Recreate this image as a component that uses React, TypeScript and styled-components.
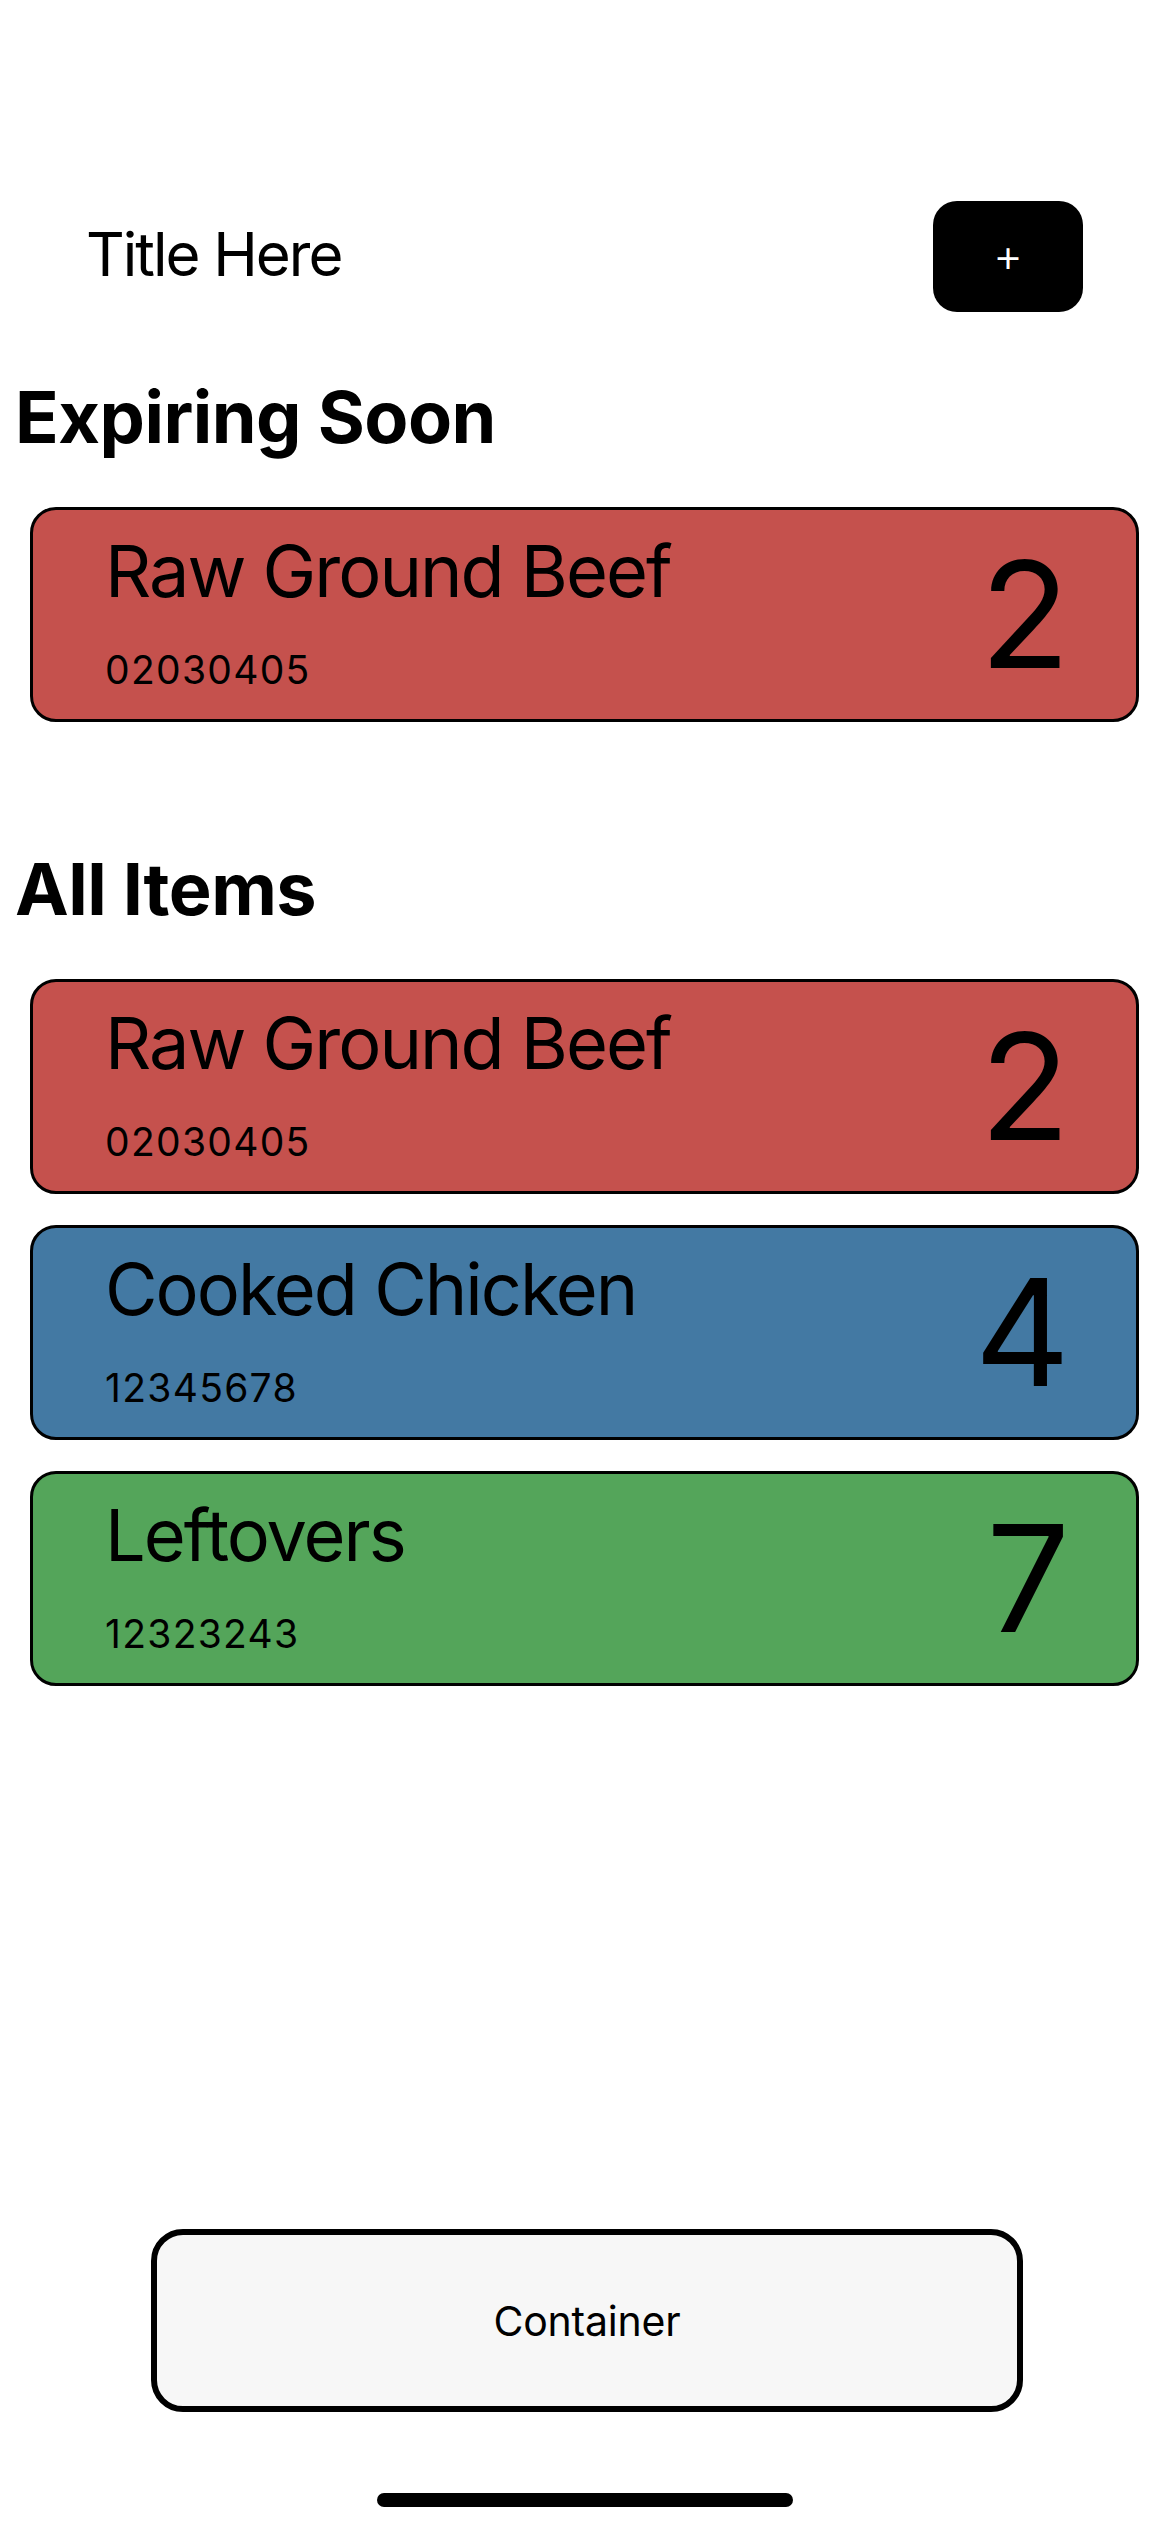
import React from "react";
import styled, { createGlobalStyle } from "styled-components";

const GlobalStyle = createGlobalStyle`
  html, body {
    margin: 0;
    padding: 0;
    background: #ffffff;
  }
  body {
    font-family: Inter, "Noto Sans", "Liberation Sans", sans-serif;
    color: #000000;
  }
  * { box-sizing: border-box; }
`;

const Screen = styled.div`
  width: 1170px;
  min-height: 2532px;
  display: flex;
  flex-direction: column;
  background: #ffffff;
`;

const Header = styled.header`
  margin-top: 201px;
  height: 111px;
  padding: 0 87px 0 86px;
  display: flex;
  align-items: center;
  justify-content: space-between;
`;

const Title = styled.h1`
  margin: 0 0 6px 0;
  font-size: 60px;
  line-height: 72px;
  font-weight: 400;
  letter-spacing: -2px;
`;

const AddButton = styled.button`
  width: 150px;
  height: 111px;
  border: none;
  border-radius: 24px;
  background: #000000;
  color: #ffffff;
  font-family: Inter, "Noto Sans", sans-serif;
  font-size: 46px;
  font-weight: 300;
  line-height: 1;
  display: flex;
  align-items: center;
  justify-content: center;
  padding: 0 0 4px 0;
  cursor: pointer;
`;

const Section = styled.section<{ $top: number }>`
  margin-top: ${(p) => p.$top}px;
  display: flex;
  flex-direction: column;
`;

const SectionHeading = styled.h2`
  margin: 0 0 47px 0;
  padding-left: 15px;
  font-size: 72px;
  line-height: 86px;
  font-weight: 700;
  letter-spacing: -0.5px;
`;

const CardList = styled.div`
  display: flex;
  flex-direction: column;
  gap: 31px;
  padding: 0 31px 0 30px;
`;

const Card = styled.div<{ $bg: string }>`
  height: 215px;
  border: 3px solid #000000;
  border-radius: 26px;
  background: ${(p) => p.$bg};
  display: flex;
  align-items: center;
  justify-content: space-between;
  padding: 0 66px 0 72px;
`;

const CardText = styled.div`
  display: flex;
  flex-direction: column;
  gap: 33px;
  margin-bottom: 8px;
`;

const ItemName = styled.div`
  font-size: 72px;
  line-height: 86px;
  font-weight: 400;
  letter-spacing: -2px;
`;

const ItemCode = styled.div`
  font-size: 39px;
  line-height: 46px;
  font-weight: 400;
  letter-spacing: 1.3px;
`;

const Count = styled.div`
  font-size: 148px;
  line-height: 1;
  font-weight: 400;
`;

const Spacer = styled.div`
  flex: 1;
`;

const Footer = styled.footer`
  display: flex;
  flex-direction: column;
  align-items: center;
  padding-bottom: 25px;
`;

const ContainerBox = styled.div`
  width: 872px;
  height: 183px;
  margin-left: 4px;
  border: 6px solid #000000;
  border-radius: 32px;
  background: #f7f7f7;
  display: flex;
  align-items: center;
  justify-content: center;
  font-size: 41px;
  font-weight: 400;
  letter-spacing: -0.2px;
`;

const HomeIndicator = styled.div`
  margin-top: 81px;
  width: 416px;
  height: 14px;
  border-radius: 7px;
  background: #000000;
`;

type Item = { name: string; code: string; count: number; color: string };

const RED = "#c5514d";
const BLUE = "#4379a3";
const GREEN = "#54a55a";

const expiring: Item[] = [
  { name: "Raw Ground Beef", code: "02030405", count: 2, color: RED },
];

const allItems: Item[] = [
  { name: "Raw Ground Beef", code: "02030405", count: 2, color: RED },
  { name: "Cooked Chicken", code: "12345678", count: 4, color: BLUE },
  { name: "Leftovers", code: "12323243", count: 7, color: GREEN },
];

function ItemCard({ item }: { item: Item }) {
  return (
    <Card $bg={item.color}>
      <CardText>
        <ItemName>{item.name}</ItemName>
        <ItemCode>{item.code}</ItemCode>
      </CardText>
      <Count>{item.count}</Count>
    </Card>
  );
}

export default function App() {
  return (
    <>
      <GlobalStyle />
      <Screen>
        <Header>
          <Title>Title Here</Title>
          <AddButton aria-label="Add">+</AddButton>
        </Header>

        <Section $top={62}>
          <SectionHeading>Expiring Soon</SectionHeading>
          <CardList>
            {expiring.map((it, i) => (
              <ItemCard key={i} item={it} />
            ))}
          </CardList>
        </Section>

        <Section $top={124}>
          <SectionHeading>All Items</SectionHeading>
          <CardList>
            {allItems.map((it, i) => (
              <ItemCard key={i} item={it} />
            ))}
          </CardList>
        </Section>

        <Spacer />

        <Footer>
          <ContainerBox>Container</ContainerBox>
          <HomeIndicator />
        </Footer>
      </Screen>
    </>
  );
}
